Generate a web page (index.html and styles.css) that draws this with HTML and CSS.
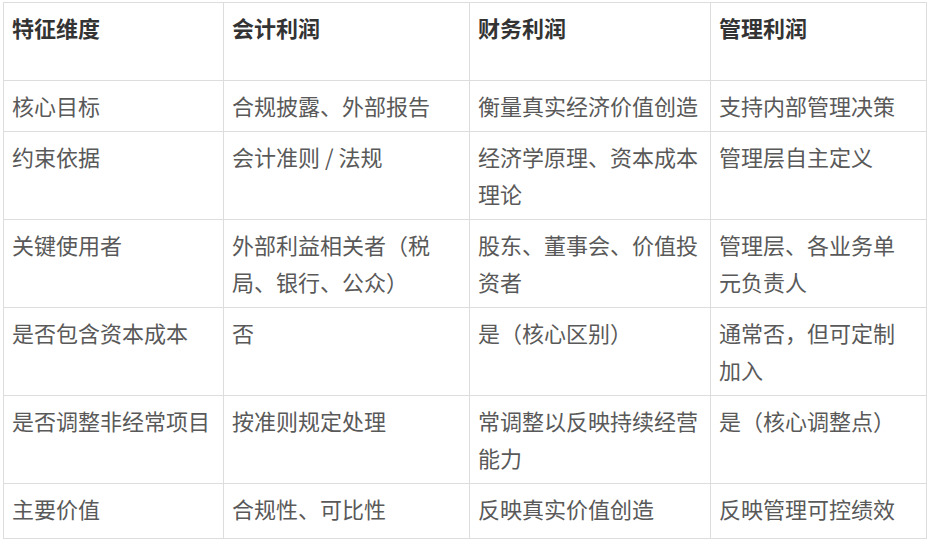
FILE: index.html
```html
<!DOCTYPE html>
<html lang="zh-CN">
<head>
<meta charset="utf-8">
<title>利润对比</title>
<link rel="stylesheet" href="styles.css">
</head>
<body>
<div class="wrap">
<table class="cmp">
<colgroup>
<col class="c1"><col class="c2"><col class="c3"><col class="c4">
</colgroup>
<thead>
<tr><th>特征维度</th><th>会计利润</th><th>财务利润</th><th>管理利润</th></tr>
</thead>
<tbody>
<tr><td>核心目标</td><td>合规披露、外部报告</td><td>衡量真实经济价值创造</td><td>支持内部管理决策</td></tr>
<tr><td>约束依据</td><td>会计准则 / 法规</td><td>经济学原理、资本成本理论</td><td>管理层自主定义</td></tr>
<tr><td>关键使用者</td><td>外部利益相关者（税局、银行、公众）</td><td>股东、董事会、价值投资者</td><td>管理层、各业务单元负责人</td></tr>
<tr><td>是否包含资本成本</td><td>否</td><td>是（核心区别）</td><td>通常否，但可定制加入</td></tr>
<tr><td>是否调整非经常项目</td><td>按准则规定处理</td><td>常调整以反映持续经营能力</td><td>是（核心调整点）</td></tr>
<tr class="last"><td>主要价值</td><td>合规性、可比性</td><td>反映真实价值创造</td><td>反映管理可控绩效</td></tr>
</tbody>
</table>
</div>
</body>
</html>
```
FILE: styles.css
```css
html, body {
  margin: 0;
  padding: 0;
  background: #ffffff;
}
.wrap {
  padding: 2px 0 0 3px;
}
.cmp {
  border-collapse: collapse;
  table-layout: fixed;
  width: 923px;
  font-family: "Noto Sans CJK SC", "Noto Sans", sans-serif;
  font-size: 22px;
  line-height: 37px;
  color: #595959;
}
.c1 { width: 220px; }
.c2 { width: 246px; }
.c3 { width: 241px; }
.c4 { width: 216px; }
.cmp th,
.cmp td {
  border: 1px solid #dddddd;
  padding: 6px 10px 7px 8px;
  text-align: left;
  vertical-align: top;
}
.cmp th {
  font-weight: 700;
  color: #333333;
  padding-bottom: 34px;
}
.cmp .last td {
  padding-bottom: 11px;
}
```
